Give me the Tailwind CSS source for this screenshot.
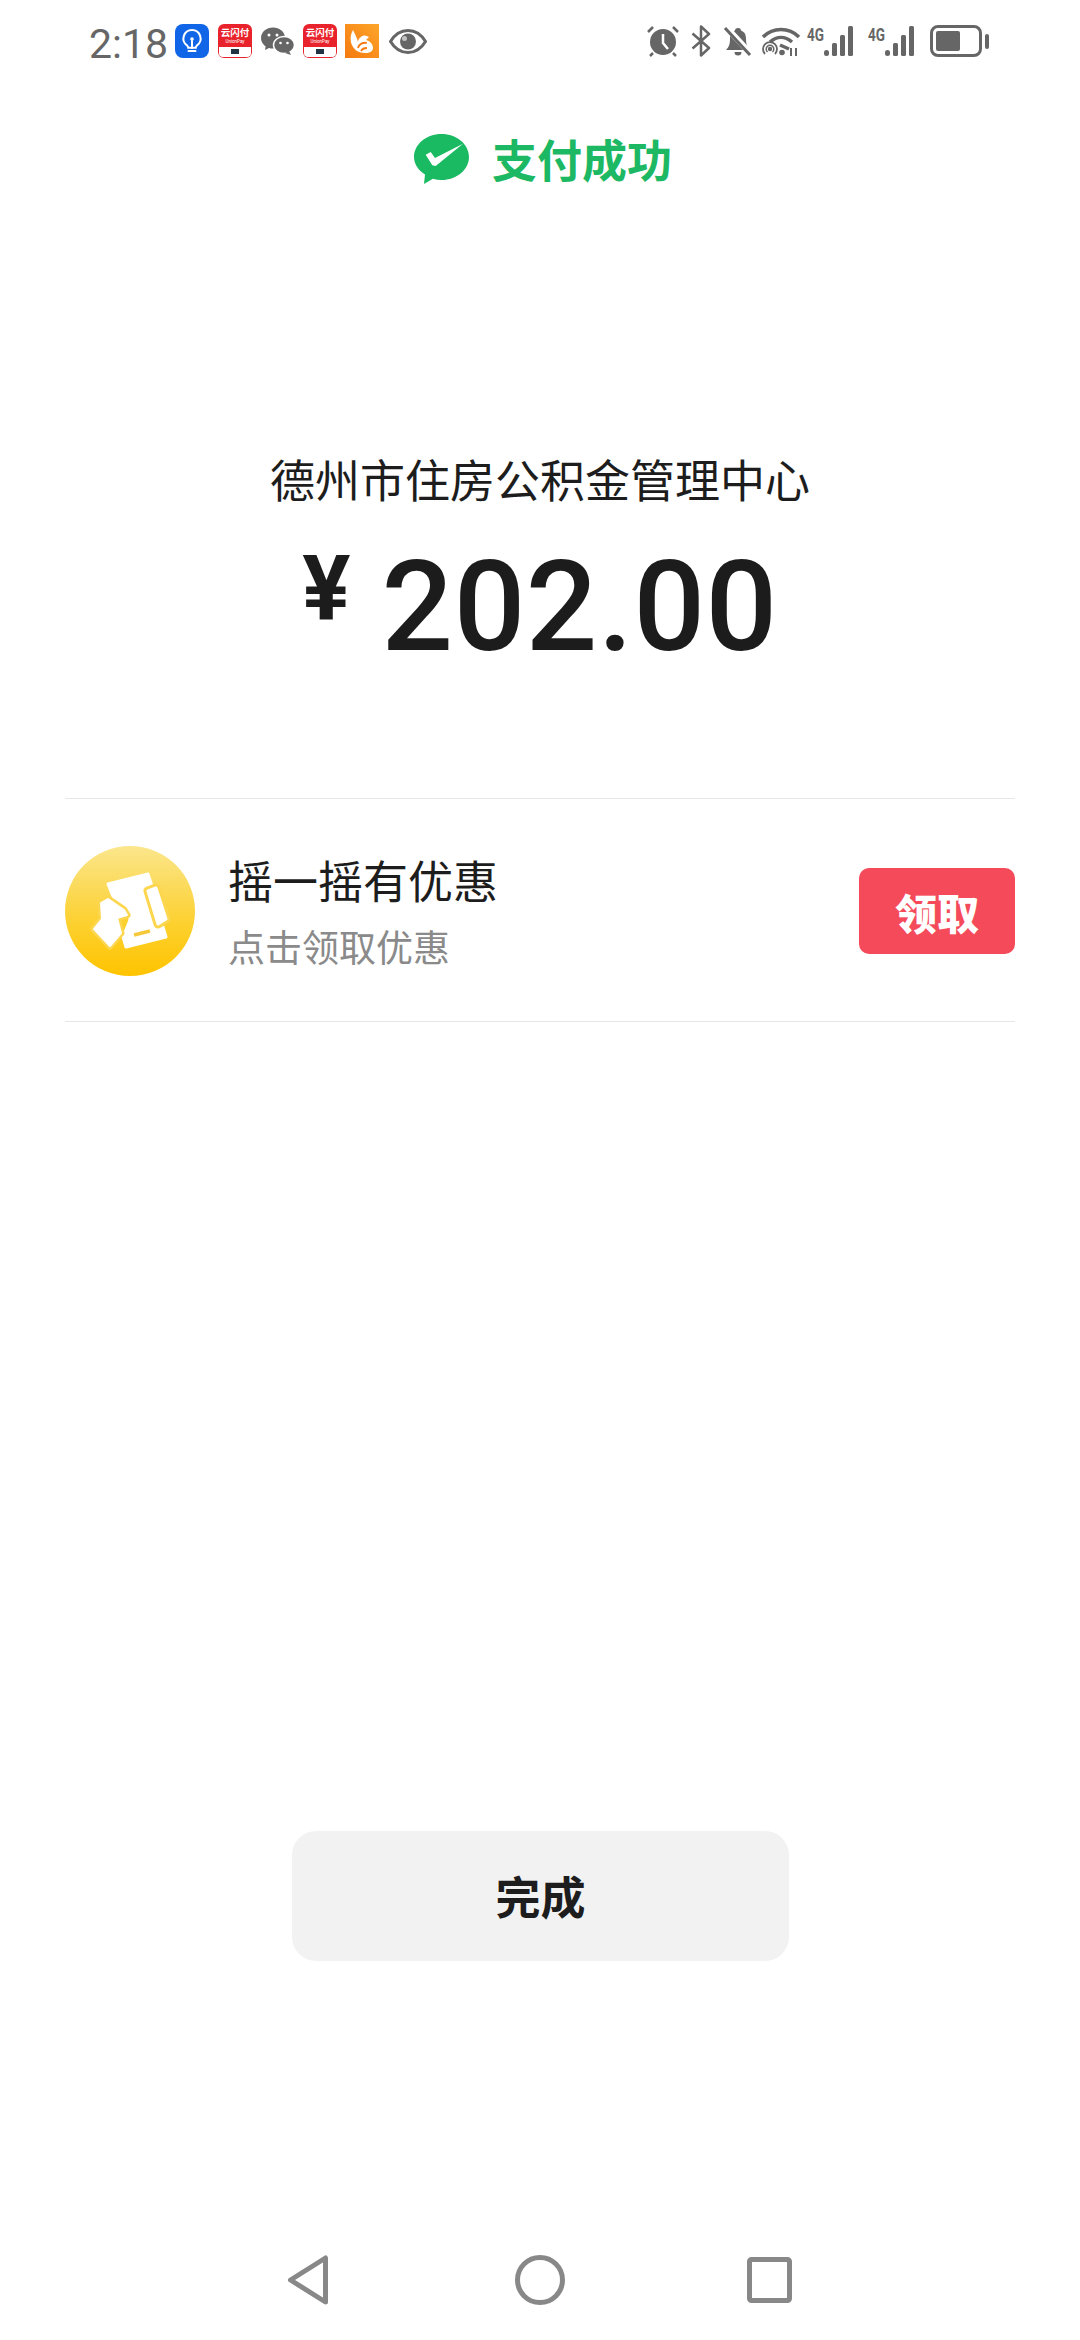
<!DOCTYPE html>
<html lang="zh">
<head>
<meta charset="utf-8">
<script src="https://cdn.jsdelivr.net/npm/@tailwindcss/browser@4"></script>
</head>
<body class="bg-white">
<div class="w-[1080px] h-[2340px] flex flex-col bg-white overflow-hidden font-['Noto_Sans_CJK_SC','Noto_Sans',sans-serif]">

  <!-- status bar -->
  <div class="h-[80px] pl-[89px] pr-[90px] pt-[24px] flex items-start justify-between text-[#666]">
    <div class="flex items-center h-[34px]">
      <span class="font-['Roboto',sans-serif] text-[41px] leading-[38px] pt-[5px] w-[86px]">2:18</span>
      <svg class="w-[34px] h-[34px]" viewBox="0 0 34 34"><rect width="34" height="34" rx="8" fill="#1166e8"/><path d="M17 6a8.500 8.500 0 0 0-5 15.400c.8.7 1.200 1.500 1.200 2.400h7.600c0-.9.4-1.700 1.200-2.400A8.500 8.500 0 0 0 17 6z" fill="none" stroke="#fff" stroke-width="2"/><path d="M13.500 27h7M17 24v-7" stroke="#fff" stroke-width="2" stroke-linecap="round"/><circle cx="17" cy="15" r="1.800" fill="#fff"/></svg>
      <svg class="ml-[9px] w-[34px] h-[34px]" viewBox="0 0 34 34"><rect width="34" height="34" rx="6" fill="#e9232c"/><path d="M1 23h32v6a4 4 0 0 1-4 4H5a4 4 0 0 1-4-4z" fill="#fff"/><rect x="13" y="25" width="8" height="5" fill="#234"/><text x="17" y="12" text-anchor="middle" font-size="9.500" font-weight="700" fill="#fff" font-family="Noto Sans CJK SC">云闪付</text><text x="17" y="19" text-anchor="middle" font-size="4.500" fill="#fff" font-family="Roboto">UnionPay</text></svg>
      <svg class="ml-[9px] w-[33px] h-[28px]" viewBox="0 0 33 28" fill="#666"><ellipse cx="12" cy="11" rx="12" ry="10.500"/><path d="M5 17l-1 6 6-3z"/><ellipse cx="23" cy="18" rx="10.500" ry="8.500" stroke="#fff" stroke-width="1.500"/><path d="M28 24l2 4-6-2z"/><circle cx="8" cy="8" r="1.500" fill="#fff"/><circle cx="16" cy="8" r="1.500" fill="#fff"/><circle cx="19.500" cy="16" r="1.300" fill="#fff"/><circle cx="26.500" cy="16" r="1.300" fill="#fff"/></svg>
      <svg class="ml-[9px] w-[34px] h-[34px]" viewBox="0 0 34 34"><rect width="34" height="34" rx="6" fill="#e9232c"/><path d="M1 23h32v6a4 4 0 0 1-4 4H5a4 4 0 0 1-4-4z" fill="#fff"/><rect x="13" y="25" width="8" height="5" fill="#234"/><text x="17" y="12" text-anchor="middle" font-size="9.500" font-weight="700" fill="#fff" font-family="Noto Sans CJK SC">云闪付</text><text x="17" y="19" text-anchor="middle" font-size="4.500" fill="#fff" font-family="Roboto">UnionPay</text></svg>
      <svg class="ml-[8px] w-[34px] h-[34px]" viewBox="0 0 34 34"><defs><linearGradient id="uc" x1="0" y1="1" x2="1" y2="0"><stop offset="0" stop-color="#f57a10"/><stop offset="1" stop-color="#fda52a"/></linearGradient></defs><rect width="34" height="34" fill="url(#uc)"/><path d="M8 6c-3 5-3 11-1 15 2 5 7 8 13 8 5 0 8-2 8-5 0-4-3-7-7-8l3-3c-3-2-6-2-8 0-2 1-3 3-3 5-1-4-3-8-5-12z" fill="#fff"/><path d="M13 24c1-4 5-6 9-5M16 27c1-2 4-3 6-3" stroke="#f57a10" stroke-width="1.800" fill="none"/></svg>
      <svg class="ml-[10px] w-[38px] h-[25px]" viewBox="0 0 38 25"><path d="M1.500 12.500C6 5 12 1.500 19 1.500S32 5 36.500 12.500C32 20 26 23.500 19 23.500S6 20 1.500 12.500z" fill="none" stroke="#666" stroke-width="3"/><circle cx="19" cy="12.500" r="8" fill="#666"/><circle cx="15.500" cy="9.500" r="2.500" fill="#fff" fill-opacity=".6"/></svg>
    </div>
    <div class="flex items-center h-[34px]">
      <svg class="w-[34px] h-[32px]" viewBox="0 0 34 32"><circle cx="17" cy="17" r="13" fill="#666"/><path d="M17 9v9l5 6" fill="none" stroke="#fff" stroke-width="2.500"/><path d="M2 7l5-5M32 7l-5-5M7 28l-3 3M27 28l3 3" stroke="#666" stroke-width="2.500"/></svg>
      <svg class="ml-[11px] w-[20px] h-[32px]" viewBox="0 0 20 32"><path d="M1.500 8.500 L18 23 L10 30.500 V1.500 L18 9 L1.500 23.500" fill="none" stroke="#666" stroke-width="2.500" stroke-linejoin="round"/></svg>
      <svg class="ml-[12px] w-[30px] h-[32px]" viewBox="0 0 30 32" fill="#666"><path d="M15 3c-2 0-3 1-3 2.500C8 7 7 10 7 14c0 5-1 8-4 11h24c-3-3-4-6-4-11 0-4-1-7-5-8.500C18 4 17 3 15 3z"/><path d="M11.500 27h7a3.500 3.500 0 0 1-7 0z"/><path d="M3 2l25 27" stroke="#fff" stroke-width="6"/><path d="M2 3l25 27" stroke="#666" stroke-width="3"/></svg>
      <svg class="ml-[8px] w-[40px] h-[32px]" viewBox="0 0 40 32" fill="none" stroke="#666"><path d="M2 12C12 2 28 2 38 12" stroke-width="3.500"/><path d="M9 17c7-6 15-6 22 0" stroke-width="3.500"/><path d="M19 20l9 4" stroke-width="3.500"/><circle cx="9" cy="24" r="2.200" fill="#666" stroke="none"/><path d="M4 29a7 7 0 1 1 10 0" stroke-width="1.800"/><path d="M6.500 27a3.800 3.800 0 1 1 5 0" stroke-width="1.500"/><circle cx="21" cy="27.500" r="2.800" fill="#666" stroke="none"/><path d="M30 23v8M35 23v8" stroke-width="2"/></svg>
      <svg class="ml-[6px] w-[51px] h-[34px] overflow-visible" viewBox="0 0 51 34"><text x="0" y="17" font-size="19" font-weight="700" fill="#666" font-family="Roboto" textLength="17" lengthAdjust="spacingAndGlyphs">4G</text><g fill="#666"><rect x="17" y="26" width="5" height="6" rx="2.500"/><rect x="25" y="19" width="5" height="13" rx="1.500"/><rect x="33" y="11" width="5" height="21" rx="1.500"/><rect x="41" y="2" width="5" height="30" rx="1.500"/></g></svg>
      <svg class="ml-[10px] w-[51px] h-[34px] overflow-visible" viewBox="0 0 51 34"><text x="0" y="17" font-size="19" font-weight="700" fill="#666" font-family="Roboto" textLength="17" lengthAdjust="spacingAndGlyphs">4G</text><g fill="#666"><rect x="17" y="26" width="5" height="6" rx="2.500"/><rect x="25" y="19" width="5" height="13" rx="1.500"/><rect x="33" y="11" width="5" height="21" rx="1.500"/><rect x="41" y="2" width="5" height="30" rx="1.500"/></g></svg>
      <svg class="ml-[11px] w-[60px] h-[32px]" viewBox="0 0 60 32"><rect x="1.500" y="1.500" width="49" height="29" rx="6.500" fill="none" stroke="#666" stroke-width="3"/><rect x="6" y="6" width="24" height="20" rx="2" fill="#666"/><rect x="55" y="9" width="4" height="15" rx="2" fill="#666"/></svg>
    </div>
  </div>

  <!-- title -->
  <div class="mt-[51px] pl-[6px] flex items-center justify-center">
    <svg class="w-[56px] h-[50px] mr-[22px]" viewBox="0 0 56 50"><path d="M27.500 0C42.700 0 55 10.300 55 23S42.700 46 27.500 46c-3 0-5.900-.4-8.600-1.200L10 50l1-9.500C4.300 36.300 0 30 0 23 0 10.300 12.300 0 27.500 0z" fill="#1aba62"/><path d="M11.700 20.700 16.700 18 21 24 49 9.700 21.700 32 18.300 31.300z" fill="#fff"/></svg>
    <span class="text-[45px] leading-[56px] font-bold text-[#1db863]">支付成功</span>
  </div>

  <!-- payee and amount -->
  <div class="mt-[264px] text-center text-[45px] leading-[56px] text-[#1d1d1d]">德州市住房公积金管理中心</div>
  <div class="mt-[38px] h-[124px] flex items-start justify-center text-[#1c1c1c] font-['Roboto',sans-serif]">
    <span class="text-[90px] leading-[90px] font-bold mr-[31px]">¥</span>
    <span class="text-[126px] leading-[124px] font-medium tracking-[0.5px]">202.00</span>
  </div>

  <!-- offer -->
  <div class="mt-[129px] mx-[65px] h-[224px] border-y border-[#e6e6e6] flex items-center">
    <svg class="w-[130px] h-[130px] shrink-0 mt-[2px]" viewBox="15 16 130 130">
      <defs><linearGradient id="gold" x1="0" y1="0" x2="0" y2="1"><stop offset="0" stop-color="#fbe68c"/><stop offset=".6" stop-color="#fcd02e"/><stop offset="1" stop-color="#ffc400"/></linearGradient></defs>
      <circle cx="80" cy="81" r="65" fill="url(#gold)"/>
      <path d="M58 54 98 44 102 56 95 63 100 87 113 97 116 107 76 117 73 107 80 90 78 78 64 69z" fill="#fff" stroke="#fff" stroke-width="3" stroke-linejoin="round"/>
      <path d="M98 61 106 58 116 89 108 94z" fill="#fff" stroke="#fcd64e" stroke-width="9" stroke-linejoin="round"/>
      <path d="M98 61 106 58 116 89 108 94z" fill="#fff" stroke="#fff" stroke-width="3" stroke-linejoin="round"/>
      <path d="M51 73 58 69 74 80 77 85 67 88 71 103 60 116 44 99 52 89z" fill="#fff" stroke="#fcd64e" stroke-width="7" stroke-linejoin="round"/>
      <path d="M51 73 58 69 74 80 77 85 67 88 71 103 60 116 44 99 52 89z" fill="#fff" stroke="#fff" stroke-width="2" stroke-linejoin="round"/>
      <path d="M84 105 100 101" stroke="#f6c93a" stroke-width="3.500"/>
    </svg>
    <div class="ml-[33px] pt-[5px] flex-1 flex flex-col">
      <span class="text-[45px] leading-[56px] text-[#1d1d1d]">摇一摇有优惠</span>
      <span class="mt-[10px] text-[37px] leading-[56px] text-[#8a8a8a]">点击领取优惠</span>
    </div>
    <div class="w-[156px] h-[86px] mt-[2px] rounded-[10px] bg-[#f44a5a] flex items-center justify-center text-white text-[42px] font-black">领取</div>
  </div>

  <!-- done -->
  <div class="mt-[809px] ml-[292px] w-[497px] h-[130px] rounded-[24px] bg-[#f2f2f2] flex items-center justify-center text-[45px] font-bold text-[#1d1d1d]">完成</div>

  <!-- nav -->
  <div class="mt-[293px] pl-[287px] flex items-center">
    <svg class="w-[42px] h-[52px]" viewBox="0 0 42 52"><path d="M3.500 26 38.500 4V48z" fill="none" stroke="#888" stroke-width="5" stroke-linejoin="round"/></svg>
    <svg class="ml-[186px] w-[50px] h-[50px]" viewBox="0 0 50 50"><circle cx="25" cy="25" r="22.500" fill="none" stroke="#888" stroke-width="5"/></svg>
    <svg class="ml-[182px] w-[45px] h-[46px]" viewBox="0 0 45 46"><rect x="2.500" y="2.500" width="40" height="41" rx="2" fill="none" stroke="#888" stroke-width="5"/></svg>
  </div>
</div>
</body>
</html>
